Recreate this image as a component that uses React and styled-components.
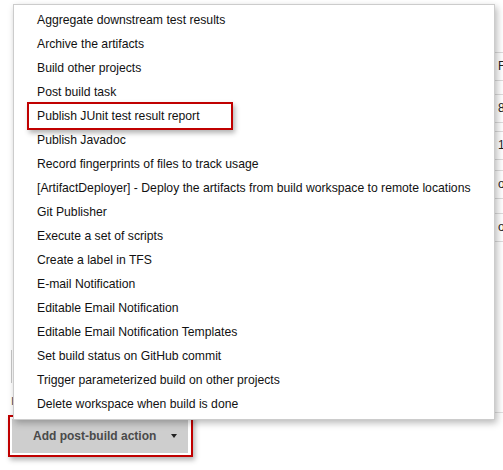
import styled, { createGlobalStyle } from 'styled-components';

const GlobalStyle = createGlobalStyle`
  html, body {
    margin: 0;
    padding: 0;
    background: #ffffff;
    font-family: "Liberation Sans", Arial, sans-serif;
  }
`;

const actions = [
    'Aggregate downstream test results',
    'Archive the artifacts',
    'Build other projects',
    'Post build task',
    'Publish JUnit test result report',
    'Publish Javadoc',
    'Record fingerprints of files to track usage',
    '[ArtifactDeployer] - Deploy the artifacts from build workspace to remote locations',
    'Git Publisher',
    'Execute a set of scripts',
    'Create a label in TFS',
    'E-mail Notification',
    'Editable Email Notification',
    'Editable Email Notification Templates',
    'Set build status on GitHub commit',
    'Trigger parameterized build on other projects',
    'Delete workspace when build is done',
];

// rows of the config table peeking out on the right
const tableRows = [
    { text: 'F', gap: 52 },
    { text: '8', gap: 13 },
    { text: '1', gap: 8 },
    { text: 'o', gap: 10 },
    { text: 'o', gap: 14 },
];

const App = () => {
    return (
        <Page>
            <GlobalStyle />
            <Backdrop>
                <Gutter>
                    <SectionEdge />
                    <Mark>I</Mark>
                </Gutter>
                <TableColumn>
                    {tableRows.map((row, i) => (
                        <TableRow key={i} gap={row.gap}>{row.text}</TableRow>
                    ))}
                    <BottomRule />
                </TableColumn>
            </Backdrop>

            <ActionArea>
                <Highlight>
                    <AddButton>
                        Add post-build action
                        <Caret />
                    </AddButton>
                </Highlight>
            </ActionArea>

            <Menu>
                {actions.map((label) => (
                    <MenuItem key={label}>
                        <ItemLabel marked={label === 'Publish JUnit test result report'}>
                            {label}
                        </ItemLabel>
                    </MenuItem>
                ))}
            </Menu>
        </Page>
    );
};

export default App;

const Page = styled.div`
    position: relative;
    width: 503px;
    height: 470px;
    overflow: hidden;
    background: #ffffff;
`;

const Backdrop = styled.div`
    display: flex;
    height: 415px;
`;

const Gutter = styled.div`
    width: 495px;
    flex-shrink: 0;
    display: flex;
    flex-direction: column;
    padding-left: 11px;
    box-sizing: border-box;
`;

const SectionEdge = styled.div`
    margin-top: 350px;
    width: 0;
    height: 33px;
    border-left: 1px solid #c8c8c8;
`;

const Mark = styled.span`
    margin-top: 12px;
    font-size: 11px;
    line-height: 12px;
    color: #555;
`;

const TableColumn = styled.div`
    flex: 1;
    display: flex;
    flex-direction: column;
    min-width: 40px;
`;

const TableRow = styled.div`
    margin-top: ${(props) => props.gap}px;
    height: 27px;
    border-top: 1px solid #dcdcdc;
    border-bottom: 1px solid #dcdcdc;
    padding-left: 3px;
    font-size: 12px;
    line-height: 27px;
    color: #222;
    white-space: nowrap;
`;

const BottomRule = styled.div`
    margin-top: auto;
    height: 2px;
    border-top: 1px solid #e0e0e0;
`;

const ActionArea = styled.div`
    padding-left: 8px;
`;

const Highlight = styled.div`
    display: inline-block;
    border: 2px solid #c00000;
    padding: 2px 3px 2px 2px;
    box-shadow: 2px 3px 5px rgba(0, 0, 0, 0.3);
`;

const AddButton = styled.div`
    display: flex;
    align-items: center;
    width: 176px;
    height: 34px;
    box-sizing: border-box;
    padding: 0 11px 0 21px;
    background: #cecece;
    color: #4a4a4a;
    font-size: 12px;
    font-weight: 700;
    white-space: nowrap;
    cursor: pointer;
`;

const Caret = styled.span`
    margin-left: auto;
    width: 0;
    height: 0;
    border-left: 3.5px solid transparent;
    border-right: 3.5px solid transparent;
    border-top: 4px solid #222;
`;

const Menu = styled.ul`
    position: absolute;
    left: 13px;
    top: 4px;
    width: 482px;
    margin: 0;
    padding: 3px 0;
    box-sizing: border-box;
    list-style: none;
    background: #ffffff;
    border: 1px solid #cccccc;
    box-shadow: 2px 3px 7px rgba(0, 0, 0, 0.28);
    z-index: 2;
`;

const MenuItem = styled.li`
    height: 24px;
    padding-left: 23px;
    display: flex;
    align-items: center;
    font-size: 12.2px;
    color: #111;
    white-space: nowrap;
    cursor: pointer;
`;

const ItemLabel = styled.span`
    ${(props) => props.marked && `
        display: inline-block;
        width: 206px;
        height: 28px;
        line-height: 24px;
        box-sizing: border-box;
        margin-left: -10px;
        padding-left: 8px;
        border: 2px solid #c00000;
        box-shadow: 2px 3px 5px rgba(0, 0, 0, 0.3);
    `}
`;
